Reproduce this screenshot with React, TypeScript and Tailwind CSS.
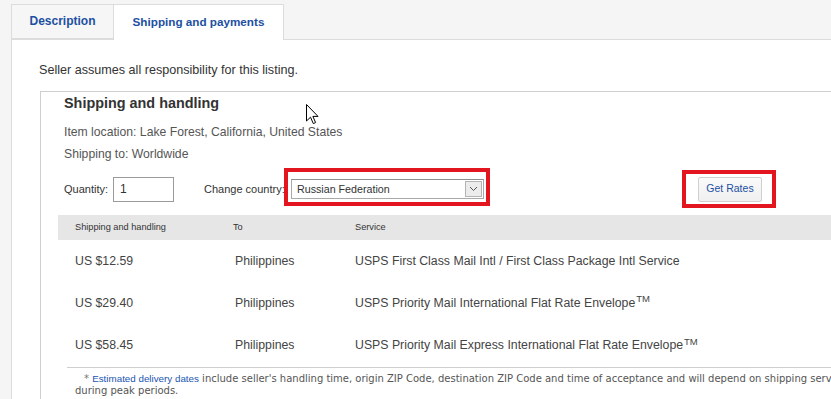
import React from 'react';

const rates = [
  { cost: 'US $12.59', to: 'Philippines', service: 'USPS First Class Mail Intl / First Class Package Intl Service', tm: false, h: 'h-[42px]' },
  { cost: 'US $29.40', to: 'Philippines', service: 'USPS Priority Mail International Flat Rate Envelope', tm: true, h: 'h-[42px]' },
  { cost: 'US $58.45', to: 'Philippines', service: 'USPS Priority Mail Express International Flat Rate Envelope', tm: true, h: 'h-[43px]' },
];

function Cursor() {
  return (
    <svg className="absolute left-[306px] top-[104px]" width="13" height="21" viewBox="0 0 13 21">
      <path d="M0.5 0.5 L0.5 17 L4.5 13.2 L7.3 19.6 L9.6 18.6 L6.9 12.4 L12 12.4 Z" fill="#fff" stroke="#000" strokeWidth="1" strokeLinejoin="miter" />
    </svg>
  );
}

export default function App() {
  return (
    <div className="relative w-[831px] h-[399px] overflow-hidden bg-[#f5f5f5] font-['Liberation_Sans',Arial,sans-serif] text-[#333]">
      {/* Tabs */}
      <div className="flex items-end pl-[11px] pt-[3px] h-[39px]">
        <div className="w-[103px] h-[35px] border border-[#dcdcdc] bg-[#f6f6f6] flex items-center justify-center pb-[1px] text-[12px] font-bold text-[#1d50a2]">
          Description
        </div>
        <div className="relative z-10 -mb-px w-[170px] h-[36px] border border-b-0 border-l-0 border-[#dcdcdc] bg-white flex items-center justify-center pb-[1px] text-[11.7px] font-bold text-[#1d50a2]">
          Shipping and payments
        </div>
      </div>

      {/* Panel */}
      <div className="ml-[11px] border-l border-t border-[#dcdcdc] bg-white h-[400px]">
        <p className="pl-[27px] pt-[23px] h-[51px] text-[12.6px] leading-[14px] text-[#333]">
          Seller assumes all responsibility for this listing.
        </p>

        <div className="ml-[28px] border-l border-t border-[#cfcfcf] h-[320px]">
          <div className="pl-[23px] pt-[2px]">
            <h3 className="text-[14.4px] leading-[18px] font-bold text-[#333]">Shipping and handling</h3>
            <div className="mt-[11px] text-[12.2px] leading-[18px] text-[#555]">Item location: Lake Forest, California, United States</div>
            <div className="mt-[4px] text-[12.2px] leading-[18px] text-[#555]">Shipping to: Worldwide</div>

            <div className="mt-[7px] h-[38px] flex items-center text-[11px] text-[#333]">
              <span className="w-[49px]">Quantity:</span>
              <div className="w-[61px] h-[25px] border border-[#9a9a9a] bg-white flex items-center pl-[6px] text-[12px]">1</div>
              <span className="ml-[30px] w-[87px] whitespace-nowrap">Change country:</span>
              <div className="relative">
                <div className="w-[193px] h-[20px] border border-[#a9a9a9] border-t-[#8e8e8e] bg-white flex items-center justify-between pl-[5px] pr-[1px]">
                  <span className="text-[10.7px]">Russian Federation</span>
                  <span className="w-[17px] h-[16px] border border-[#b4b4b4] bg-[#ececec] flex items-center justify-center">
                    <svg width="9" height="6" viewBox="0 0 9 6">
                      <path d="M1 1 L4.5 4.5 L8 1" fill="none" stroke="#555" strokeWidth="1" />
                    </svg>
                  </span>
                </div>
                <div className="absolute left-[-7px] top-[-11px] w-[206px] h-[38px] border-[4px] border-[#e3161f]" />
              </div>
              <div className="relative ml-[214px]">
                <div className="w-[64px] h-[25px] border border-[#d0d0d0] rounded-[2px] bg-gradient-to-b from-[#fafafa] to-[#f0f0f0] flex items-center justify-center text-[10.5px] text-[#1d50a2]">
                  Get Rates
                </div>
                <div className="absolute left-[-16px] top-[-7px] w-[94px] h-[38px] border-[4px] border-[#e3161f]" />
              </div>
            </div>
          </div>

          {/* Rates table */}
          <div className="mt-[7px] ml-[17px]">
            <div className="h-[25px] bg-[#e6e6e6] flex items-center text-[9.2px] text-[#333]">
              <span className="pl-[17px] w-[175px]">Shipping and handling</span>
              <span className="w-[122px]">To</span>
              <span>Service</span>
            </div>
            {rates.map((r) => (
              <div key={r.cost} className={`${r.h} flex items-center text-[12.3px] text-[#444]`}>
                <span className="pl-[17px] w-[177px]">{r.cost}</span>
                <span className="w-[120px]">{r.to}</span>
                <span>
                  {r.service}
                  {r.tm && <sup className="text-[9.5px] ml-[1px]">TM</sup>}
                </span>
              </div>
            ))}
          </div>

          <div className="ml-[26px] border-t border-[#cfcfcf] pt-[5px] pl-[8px] text-[10px] leading-[12px] text-[#555] font-['DejaVu_Sans',Verdana,sans-serif]">
            <div className="pl-[9px] whitespace-nowrap">
              <span className="text-[#777]">* </span>
              <span className="text-[#1a55b0] font-['Liberation_Sans',Arial,sans-serif] text-[9.8px]">Estimated delivery dates</span>{' '}
              include seller's handling time, origin ZIP Code, destination ZIP Code and time of acceptance and will depend on shipping servi
            </div>
            <div>during peak periods.</div>
          </div>
        </div>
      </div>

      <Cursor />
    </div>
  );
}
